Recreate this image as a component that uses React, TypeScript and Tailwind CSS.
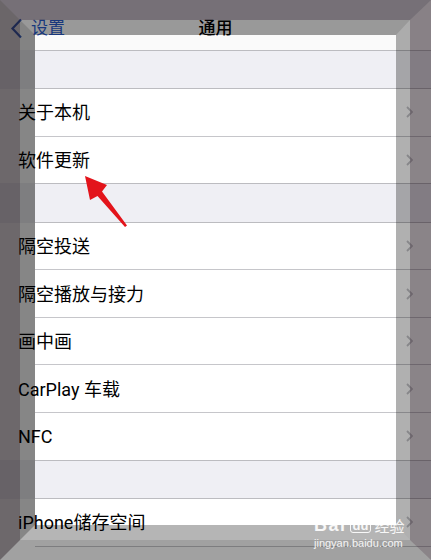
const font = { fontFamily: 'Roboto, "Noto Sans CJK SC", sans-serif' }

const Chevron = () => (
  <svg width="7" height="12" viewBox="0 0 7 12" className="shrink-0">
    <path d="M1 1l5 5-5 5" fill="none" stroke="#c4c4c8" strokeWidth="1.8" />
  </svg>
)

const Row = ({ label }: { label: string }) => (
  <div className="flex h-[46.6px] items-center bg-white pl-[18px] pr-[18px]">
    <span className="flex-1 pt-[2px] text-[18px] leading-none text-black">{label}</span>
    {label && <Chevron />}
  </div>
)

const Sep = () => <div className="ml-[35px] h-px bg-[#c6c6ca]" />
const Line = () => <div className="ml-[35px] h-px bg-[#bcbcc0]" />

const Group = ({ items }: { items: string[] }) => (
  <div className="bg-white">
    {items.map((label, i) => (
      <div key={i}>
        {i > 0 && <Sep />}
        <Row label={label} />
      </div>
    ))}
  </div>
)

const Watermark = () => (
  <div className="absolute left-[314px] top-[500px] flex flex-col items-start text-white/90">
    <svg width="30" height="19" viewBox="0 0 30 19" className="ml-[29px]">
      <g fill="none" stroke="#fff" strokeOpacity="0.9" strokeWidth="1.4">
        <ellipse cx="6" cy="9.5" rx="3" ry="3.6" />
        <ellipse cx="11.5" cy="4.3" rx="3" ry="3.6" />
        <ellipse cx="18.5" cy="4.3" rx="3" ry="3.6" />
        <ellipse cx="24" cy="9.5" rx="3" ry="3.6" />
        <path d="M9 18c0-4 3-6.5 6-6.5s6 2.5 6 6.5z" />
      </g>
    </svg>
    <div className="-mt-[3px] flex items-center gap-[3px]">
      <span className="text-[18px] font-bold leading-none tracking-[1.5px]" style={{ fontFamily: '"Liberation Sans", sans-serif' }}>
        Bai
      </span>
      <span
        className="rounded-[3px] border-[1.5px] border-white/90 px-[2px] text-[13px] font-bold leading-[13px]"
        style={{ fontFamily: '"Liberation Sans", sans-serif' }}
      >
        du
      </span>
      <span className="text-[15px] leading-none" style={{ fontFamily: '"Noto Sans CJK SC", sans-serif' }}>
        经验
      </span>
    </div>
    <span className="mt-[4px] text-[11px] leading-none" style={{ fontFamily: '"Liberation Sans", sans-serif' }}>
      jingyan.baidu.com
    </span>
  </div>
)

const Arrow = () => (
  <svg width="431" height="560" className="pointer-events-none absolute left-0 top-0">
    <polygon
      points="85,176 107,185 102,191.5 127,225.5 125,227 97.5,196 90,200"
      fill="#e3141b"
    />
  </svg>
)

const App = () => {
  return (
    <div className="relative h-[560px] w-[431px] overflow-hidden bg-[#efeff4]" style={font}>
      <div className="flex h-[50px] items-start bg-[#fafafa] pt-[17px]">
        <div className="flex w-[120px] items-center pl-[10px]">
          <svg width="13" height="21" viewBox="0 0 13 21">
            <path d="M11 1.5L2.5 10.5 11 19.5" fill="none" stroke="#3a5fb8" strokeWidth="2.2" />
          </svg>
          <span className="ml-[8px] text-[17px] leading-[22px] text-[#2a5ccc]">设置</span>
        </div>
        <div className="flex-1 text-center text-[17px] font-medium leading-[22px] text-black">通用</div>
        <div className="w-[120px]" />
      </div>
      <Line />
      <div className="h-[37px]" />
      <Line />
      <Group items={['关于本机', '软件更新']} />
      <Line />
      <div className="h-[37.5px]" />
      <Line />
      <Group items={['隔空投送', '隔空播放与接力', '画中画', 'CarPlay 车载', 'NFC']} />
      <Line />
      <div className="h-[37.3px]" />
      <Line />
      <Group items={['iPhone储存空间', '']} />

      <Arrow />

      {/* bevelled frame laid over the screenshot */}
      <div className="pointer-events-none absolute inset-0 border-t-[20px] border-r-[21px] border-b-[20px] border-l-[20px] border-t-[#140a1692] border-r-[#170b1380] border-b-[#0000005e] border-l-[#0d050a99]">
        <div className="h-full w-full border-t-[15px] border-r-[14px] border-b-[15px] border-l-[15px] border-t-[#00000063] border-r-[#0000004f] border-b-[#0000004a] border-l-[#00000078]" />
      </div>

      <Watermark />
    </div>
  )
}

export default App
